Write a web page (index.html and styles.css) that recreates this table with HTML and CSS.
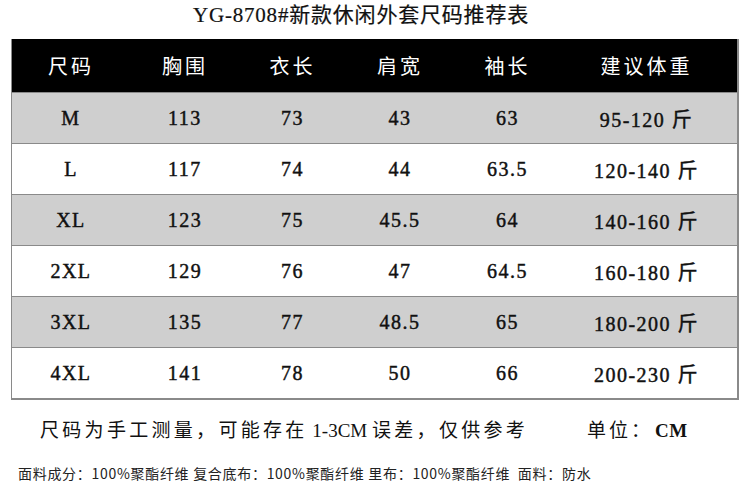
FILE: index.html
```html
<!DOCTYPE html>
<html lang="zh">
<head>
<meta charset="utf-8">
<link rel="stylesheet" href="styles.css">
</head>
<body>
<div class="page">
  <h1 class="title">YG-8708#新款休闲外套尺码推荐表</h1>
  <div class="chart">
    <div class="row head">
      <div>尺码</div><div>胸围</div><div>衣长</div><div>肩宽</div><div>袖长</div><div>建议体重</div>
    </div>
    <div class="row grey"><div>M</div><div>113</div><div>73</div><div>43</div><div>63</div><div>95-120 斤</div></div>
    <div class="row"><div>L</div><div>117</div><div>74</div><div>44</div><div>63.5</div><div>120-140 斤</div></div>
    <div class="row grey"><div>XL</div><div>123</div><div>75</div><div>45.5</div><div>64</div><div>140-160 斤</div></div>
    <div class="row"><div>2XL</div><div>129</div><div>76</div><div>47</div><div>64.5</div><div>160-180 斤</div></div>
    <div class="row grey"><div>3XL</div><div>135</div><div>77</div><div>48.5</div><div>65</div><div>180-200 斤</div></div>
    <div class="row"><div>4XL</div><div>141</div><div>78</div><div>50</div><div>66</div><div>200-230 斤</div></div>
  </div>
  <div class="note">
    <span class="note-main">尺码为手工测量，可能存在<span class="num"> 1-3CM </span>误差，仅供参考</span>
    <span class="note-unit">单位：<b class="cm">CM</b></span>
  </div>
  <p class="material">面料成分：100%聚酯纤维 复合底布：100%聚酯纤维 里布：100%聚酯纤维&nbsp; 面料：防水</p>
</div>
</body>
</html>
```
FILE: styles.css
```css
html, body {
  margin: 0;
  padding: 0;
  background: #ffffff;
}
.page {
  width: 750px;
  height: 491px;
  overflow: hidden;
  font-family: "Liberation Serif", "Noto Sans CJK SC", serif;
  color: #111;
}
.title {
  margin: 0;
  height: 39px;
  line-height: 30px;
  padding-right: 28px;
  font-size: 21px;
  font-weight: normal;
  text-align: center;
  letter-spacing: 0.8px;
  color: #111;
  -webkit-text-stroke: 0.2px #111;
}
.chart {
  margin-left: 11px;
  width: 728px;
  box-sizing: border-box;
  border-left: 1px solid #8a8a8a;
  border-right: 2px solid #8a8a8a;
  border-bottom: 2px solid #8a8a8a;
}
.row {
  display: grid;
  grid-template-columns: 118px 110px 105px 110px 105px 1fr;
  height: 51px;
  box-sizing: border-box;
  border-top: 1px solid #8a8a8a;
  align-items: center;
  text-align: center;
  font-size: 20px;
  font-weight: normal;
  letter-spacing: 1.5px;
  -webkit-text-stroke: 0.45px #111;
  background: #ffffff;
}
.row.grey {
  background: #cfcfcf;
}
.row.head {
  height: 53px;
  border-top: none;
  background: #000000;
  color: #ffffff;
  -webkit-text-stroke: 0;
  font-size: 20px;
  letter-spacing: 3px;
}
.row > div:last-child {
  padding-right: 4px;
}
.note {
  display: flex;
  align-items: center;
  height: 57px;
  padding-left: 40px;
  font-size: 19px;
  color: #111;
  white-space: nowrap;
}
.note-main {
  width: 547px;
  letter-spacing: 3.3px;
}
.num {
  letter-spacing: 0;
}
.note-unit {
  letter-spacing: 3px;
}
.cm {
  font-weight: bold;
  letter-spacing: 0.5px;
  padding-left: 2px;
}
.material {
  margin: 0;
  padding-left: 18px;
  padding-top: 6px;
  font-family: "Noto Sans CJK SC", "Noto Sans", sans-serif;
  font-size: 14px;
  letter-spacing: 0.7px;
  color: #222;
  line-height: 20px;
  white-space: nowrap;
}
```
